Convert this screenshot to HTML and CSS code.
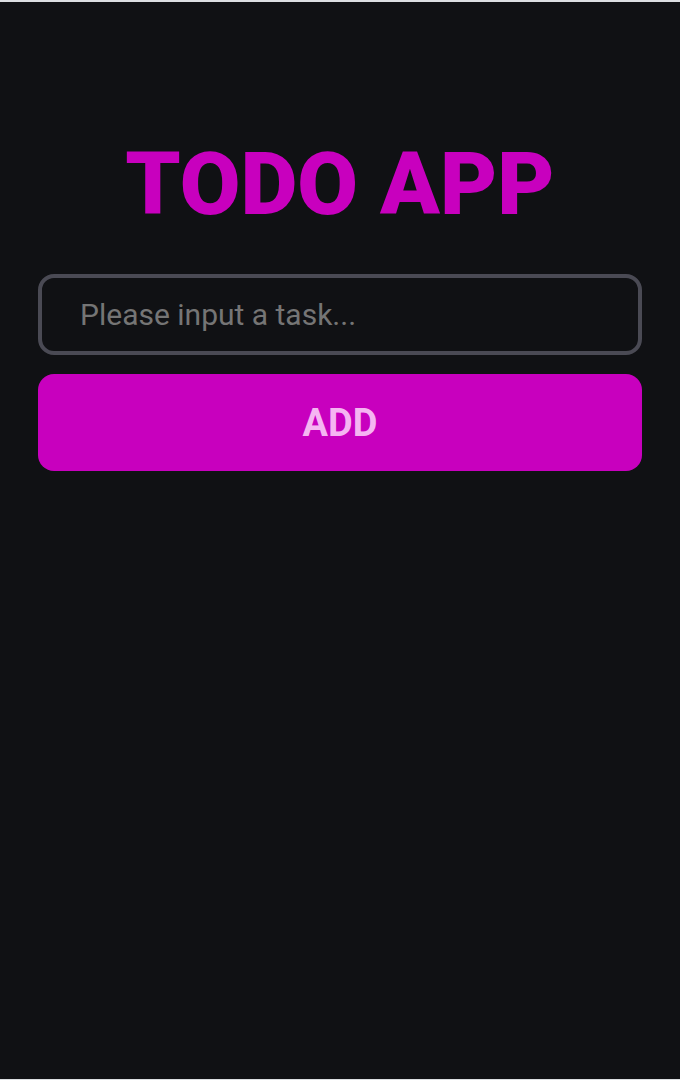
FILE: index.html
```html
<!DOCTYPE html>
<html lang="en">
<head>
  <meta charset="utf-8">
  <meta name="viewport" content="width=device-width, initial-scale=1">
  <title>Todo App</title>
  <link rel="stylesheet" href="styles.css">
</head>
<body>
  <main class="app">
    <h1 class="title">TODO APP</h1>
    <form class="task-form">
      <input class="task-input" type="text" aria-label="Task" placeholder="Please input a task...">
      <button class="add-button" type="submit">ADD</button>
    </form>
  </main>
</body>
</html>
```

FILE: styles.css
```css
* {
  box-sizing: border-box;
}

body {
  margin: 0;
  font-family: Roboto, "Liberation Sans", sans-serif;
  background: #101114;
}

.app {
  min-height: 100vh;
  padding: 128px 38px 40px;
  border-top: 2px solid #dcdfe2;
  border-bottom: 1px solid #dcdfe2;
}

.title {
  margin: 0 0 36px;
  font-size: 88px;
  font-weight: 900;
  line-height: 108px;
  text-align: center;
  color: #c800be;
}

.task-form {
  display: flex;
  flex-direction: column;
  gap: 19px;
}

.task-input {
  width: 100%;
  padding: 20px 38px;
  border: 4px solid #4a4a54;
  border-radius: 16px;
  font: 400 30px/33px Roboto, "Liberation Sans", sans-serif;
  color: #fff;
  background: transparent;
}

.task-input::placeholder {
  color: #757575;
  opacity: 1;
}

.add-button {
  width: 100%;
  padding: 27px 26px 25px;
  border: 0;
  border-radius: 16px;
  font: 700 38px/45px Roboto, "Liberation Sans", sans-serif;
  color: #f5b5f2;
  background: #c800be;
}
```
